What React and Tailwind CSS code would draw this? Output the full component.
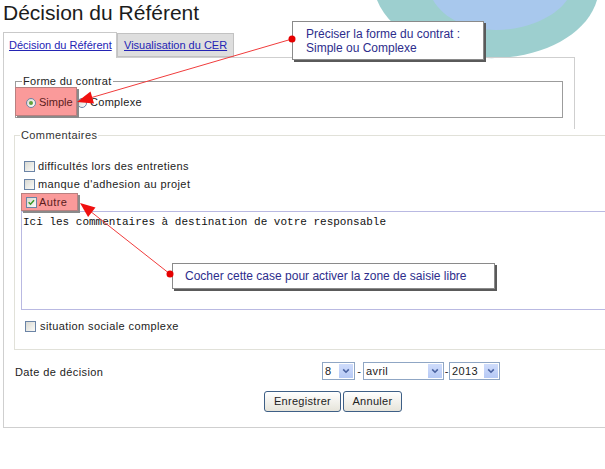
import React from "react";

function CheckBox({ checked }) {
  return (
    <span className="relative inline-block w-[11px] h-[11px] shrink-0 border border-[#6b84a6] bg-linear-to-br from-[#d9d9d2] to-[#fbfbf8]">
      {checked && (
        <svg viewBox="0 0 11 11" className="absolute inset-0 w-full h-full">
          <path d="M2 5.2 L4.3 7.6 L8.6 2.8" fill="none" stroke="#3a9a28" strokeWidth="1.8" />
        </svg>
      )}
    </span>
  );
}

function Radio({ checked }) {
  return (
    <span className="relative inline-flex items-center justify-center w-[10px] h-[10px] shrink-0 rounded-full border border-[#6b84a6] bg-linear-to-br from-[#d9d9d2] to-white">
      {checked && <span className="w-[4px] h-[4px] rounded-full bg-[#62a23c]" />}
    </span>
  );
}

function DropSelect({ value, className }) {
  return (
    <div className={`flex items-center h-[18px] border border-[#8fa6c4] bg-white ${className}`}>
      <span className="flex-1 pl-[2px] text-[11px] tracking-[0.4px] text-[#222] leading-none">{value}</span>
      <span className="w-[14px] h-[14px] mr-[1px] flex items-center justify-center bg-linear-to-b from-[#cfdcfb] to-[#b6c9f5]">
        <svg viewBox="0 0 10 10" className="w-[8px] h-[8px]">
          <path d="M1.5 3 L5 6.5 L8.5 3" fill="none" stroke="#4a62a0" strokeWidth="2" />
        </svg>
      </span>
    </div>
  );
}

function Tip({ className, children }) {
  return (
    <div className={`absolute z-10 bg-white border border-[#8a8a8a] shadow-[2px_2px_0_#5a5a5a] text-[12px] text-[#2d2d8c] leading-[14px] ${className}`}>
      {children}
    </div>
  );
}

export default function App() {
  return (
    <div className="relative w-[605px] h-[469px] overflow-hidden bg-white font-['Liberation_Sans',Arial,sans-serif] text-[#222]">
      {/* decorative blob, top right */}
      <svg className="absolute left-0 top-0 w-[605px] h-[70px]" viewBox="0 0 605 70">
        <path d="M377 0 C392 38 448 60 498 58 C548 56 588 32 597 0 Z" fill="#9dcfcf" />
        <path d="M433 0 C444 19 468 30 496 30 C528 30 556 16 567 0 Z" fill="#a8c8ed" />
      </svg>

      <div className="relative">
        <h1 className="pl-[3px] text-[21px] leading-[26px] text-[#1c1c1c]">Décision du Référent</h1>

        <div className="flex items-start mt-[6px] pl-[3px]">
          <div className="relative z-10 w-[114px] h-[26px] -mb-[1px] flex items-center pl-[5px] bg-white border border-b-0 border-[#c9c9c9]">
            <span className="text-[11px] text-[#2424b4] underline">Décision du Référent</span>
          </div>
          <div className="w-[117px] h-[24px] mt-[1px] flex items-center pl-[6px] bg-[#dedede] border border-[#c2c2c2]">
            <span className="text-[11px] text-[#2424b4] underline">Visualisation du CER</span>
          </div>
        </div>

        <div className="ml-[3px] w-[640px] border-l border-b border-[#cfcfcf] pb-[15px]">
          <div className="w-[571px] border-t border-r border-[#cfcfcf] pt-[17px] pb-[11px]">
            <fieldset className="ml-[11px] w-[548px] border border-[#9c9c9c] pb-[1px]">
              <legend className="ml-[6px] px-[1px] text-[11px] leading-[13px] tracking-[0.3px]">Forme du contrat</legend>
              <div className="flex items-center -mt-[1px] -ml-[1px]">
                <div className="relative z-10 w-[62px] h-[29px] flex items-center gap-[3px] pl-[10px] pt-[2px] bg-[#fa9a9a] border border-[#b98080] shadow-[2px_2px_0_#8a8a8a]">
                  <Radio checked />
                  <span className="text-[11px] text-[#5a1c1c]">Simple</span>
                </div>
                <div className="flex items-center gap-[3px] ml-[0px] pt-[2px]">
                  <Radio />
                  <span className="text-[11px] tracking-[0.3px]">Complexe</span>
                </div>
              </div>
            </fieldset>
          </div>

          <fieldset className="ml-[10px] w-[620px] border border-[#e1e1d9] pb-[14px]">
            <legend className="ml-[5px] px-[1px] text-[11px] leading-[13px] tracking-[0.4px] text-[#333]">Commentaires</legend>
            <div className="mt-[15px] ml-[9px] h-[18px] flex items-center gap-[3px]">
              <CheckBox />
              <span className="text-[11px] tracking-[0.4px]">difficultés lors des entretiens</span>
            </div>
            <div className="ml-[9px] h-[18px] flex items-center gap-[3px]">
              <CheckBox />
              <span className="text-[11px] tracking-[0.4px]">manque d'adhesion au projet</span>
            </div>
            <div className="relative z-10 ml-[6px] w-[57px] h-[18px] flex items-center gap-[2px] pl-[4px] bg-[#fa9a9a] border border-[#b98080] shadow-[2px_2px_0_#8a8a8a]">
              <CheckBox checked />
              <span className="text-[11px] tracking-[0.4px] text-[#5a1c1c]">Autre</span>
            </div>
            <div className="ml-[6px] h-[99px] border border-[#b9b9e2] pl-[1px] pt-[4px] font-['Liberation_Mono','Courier_New',monospace] text-[11px] leading-[13px] text-[#111]">
              Ici les commentaires à destination de votre responsable
            </div>
            <div className="mt-[7px] ml-[10px] h-[18px] flex items-center gap-[4px]">
              <CheckBox />
              <span className="text-[11px] tracking-[0.4px]">situation sociale complexe</span>
            </div>
          </fieldset>

          <div className="flex items-center mt-[12px] h-[18px]">
            <span className="w-[318px] pl-[11px] pt-[3px] text-[11px] tracking-[0.4px]">Date de décision</span>
            <DropSelect value="8" className="w-[33px]" />
            <span className="w-[8px] text-center text-[11px] leading-none">-</span>
            <DropSelect value="avril" className="w-[81px]" />
            <span className="w-[5px] text-center text-[11px] leading-none">-</span>
            <DropSelect value="2013" className="w-[51px]" />
          </div>

          <div className="flex gap-[2px] mt-[11px] pl-[260px]">
            <button className="w-[77px] h-[21px] rounded-[3px] border border-[#3e5f86] bg-linear-to-b from-white to-[#e6e4da] text-[11px] tracking-[0.3px]">Enregistrer</button>
            <button className="w-[59px] h-[21px] rounded-[3px] border border-[#3e5f86] bg-linear-to-b from-white to-[#e6e4da] text-[11px] tracking-[0.3px]">Annuler</button>
          </div>
        </div>
      </div>

      {/* annotations */}
      <Tip className="left-[292px] top-[21px] w-[192px] h-[39px] pl-[13px] pt-[5px]">
        <div>Préciser la forme du contrat :</div>
        <div>Simple ou Complexe</div>
      </Tip>
      <Tip className="left-[172px] top-[263px] w-[323px] h-[26px] pl-[12px] flex items-center">
        Cocher cette case pour activer la zone de saisie libre
      </Tip>

      <svg className="absolute inset-0 z-20 w-[605px] h-[469px] pointer-events-none" viewBox="0 0 605 469">
        <line x1="292" y1="39" x2="90" y2="98" stroke="#f03c3c" strokeWidth="1" />
        <polygon points="77,102 94,103.5 90.5,91.5" fill="#f01010" />
        <circle cx="292" cy="39" r="3.5" fill="#e60000" />
        <line x1="170" y1="274" x2="90" y2="211" stroke="#f03c3c" strokeWidth="1" />
        <polygon points="80,203 95.5,207.6 88.1,217" fill="#f01010" />
        <circle cx="170" cy="274" r="3.5" fill="#e60000" />
      </svg>
    </div>
  );
}
